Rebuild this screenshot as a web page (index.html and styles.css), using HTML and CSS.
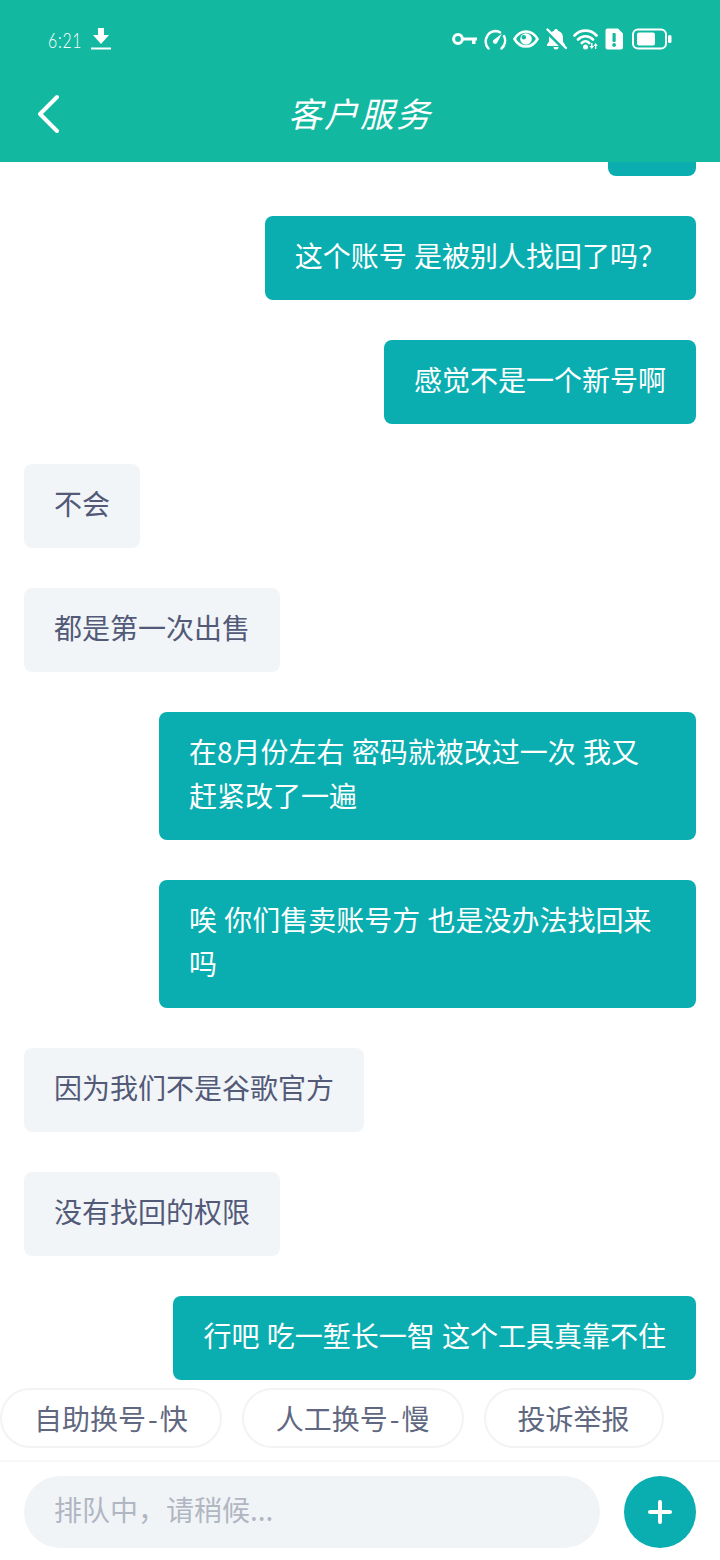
FILE: index.html
```html
<!DOCTYPE html>
<html lang="zh-CN">
<head>
    <meta charset="UTF-8">
    <meta name="viewport" content="width=device-width, initial-scale=1.0">
    <title>客户服务</title>
    <link rel="stylesheet" href="styles.css">
</head>
<body>
    <div class="page">
        <div class="header">
            <!-- Status bar -->
            <div class="status-bar">
                <div class="status-left">
                    <span class="status-time">6:21</span>
                    <svg width="20" height="22" viewBox="0 0 20 22"><path d="M7 0h6v7h5l-8 9-8-9h5z" fill="#fff"/><rect y="19.500" width="20" height="2" fill="#fff"/></svg>
                </div>
                <div class="status-right">
                    <svg width="25" height="14" viewBox="0 0 25 14"><circle cx="6" cy="7" r="4.400" fill="none" stroke="#fff" stroke-width="3"/><path d="M10 5.500h15v3h-1.500v3.500h-3.500V8.500H10z" fill="#fff"/></svg>
                    <svg width="24" height="21" viewBox="0 0 24 21"><path d="M5.500 19.500A10.500 10.500 0 0 1 12 2a10 10 0 0 1 5 1.300M21 7a10.500 10.500 0 0 1-2.500 12.500" fill="none" stroke="#fff" stroke-width="2.500" stroke-linecap="round"/><path d="M19 4.500 14 14a2.400 2.400 0 0 1-4-2.500z" fill="#fff"/></svg>
                    <svg width="26" height="18" viewBox="0 0 26 18"><path d="M1.500 9C4.500 3.800 8.500 1.500 13 1.500S21.500 3.800 24.500 9c-3 5.200-7 7.500-11.500 7.500S4.500 14.200 1.500 9z" fill="none" stroke="#fff" stroke-width="2.600"/><circle cx="13" cy="9" r="5.800" fill="#fff"/><circle cx="10.800" cy="7.300" r="2.200" fill="#12b8a0"/></svg>
                    <svg width="22" height="22" viewBox="0 0 22 22"><path d="M11 1c1 0 1.800.7 1.900 1.700 3.100.8 5.100 3.300 5.100 6.600v4.400l2 2.800v1.500H2v-1.500l2-2.800V9.300c0-3.300 2-5.800 5.100-6.600C9.200 1.700 10 1 11 1z" fill="#fff"/><path d="M8.500 19h5a2.500 2.500 0 0 1-5 0z" fill="#fff"/><path d="M1.500 2.500 20 21" stroke="#12b8a0" stroke-width="4.500"/><path d="M2.500 1.500 21 20" stroke="#fff" stroke-width="2.400" stroke-linecap="round"/></svg>
                    <svg width="26" height="22" viewBox="0 0 26 22"><path d="M1.500 7.500C7.500 1 17.500 1 23.500 7.500M5 11.500c4.200-4.400 10.800-4.400 15 0M8.800 15c2.200-2.200 5.200-2.200 7.400 0" fill="none" stroke="#fff" stroke-width="2.600" stroke-linecap="round"/><circle cx="12.500" cy="19" r="2.500" fill="#fff"/><path d="M18 15.500h1.500v3H21l-2.250 3-2.250-3H18zM22 21.500h1.300v-3h1.500l-2.150-3-2.150 3H22z" fill="#fff" transform="translate(0 -.5)"/></svg>
                    <svg width="18" height="22" viewBox="0 0 18 22"><path d="M2.500 .5H13l5 5v14a2 2 0 0 1-2 2H2.500a2 2 0 0 1-2-2v-17a2 2 0 0 1 2-2z" fill="#fff"/><rect x="7.500" y="5" width="3.200" height="9" rx="1" fill="#12b8a0"/><circle cx="9.100" cy="17" r="1.900" fill="#12b8a0"/></svg>
                    <svg class="status-battery" width="40" height="22" viewBox="0 0 40 22"><rect x="1" y="1.500" width="33" height="19" rx="5" fill="none" stroke="#fff" stroke-width="2"/><rect x="5" y="4.500" width="18" height="13" rx="2" fill="#fff"/><rect x="36" y="7" width="3.500" height="8" rx="1.500" fill="#fff"/></svg>
                </div>
            </div>
            <!-- Nav bar -->
            <div class="nav-bar">
                <svg class="nav-back" width="24" height="40" viewBox="0 0 24 40"><path d="M21 3 4 20l17 17" fill="none" stroke="#fff" stroke-width="4" stroke-linecap="round" stroke-linejoin="round"/></svg>
                <h1 class="nav-title">客户服务</h1>
            </div>
        </div>

        <!-- Messages -->
        <div class="messages">
            <div class="msg msg-me msg-stub"></div>
            <div class="msg msg-me">这个账号 是被别人找回了吗？</div>
            <div class="msg msg-me">感觉不是一个新号啊</div>
            <div class="msg msg-them">不会</div>
            <div class="msg msg-them">都是第一次出售</div>
            <div class="msg msg-me">在8月份左右 密码就被改过一次 我又赶紧改了一遍</div>
            <div class="msg msg-me">唉 你们售卖账号方 也是没办法找回来吗</div>
            <div class="msg msg-them">因为我们不是谷歌官方</div>
            <div class="msg msg-them">没有找回的权限</div>
            <div class="msg msg-me">行吧 吃一堑长一智 这个工具真靠不住</div>
        </div>

        <!-- Quick actions -->
        <div class="chips">
            <button class="chip">自助换号<span class="chip-dash">-</span>快</button>
            <button class="chip">人工换号<span class="chip-dash">-</span>慢</button>
            <button class="chip">投诉举报</button>
        </div>

        <!-- Input -->
        <div class="input-bar">
            <input class="input-box" type="text" placeholder="排队中，请稍候...">
            <button class="add-btn">
                <svg width="24" height="24" viewBox="0 0 24 24"><path d="M12 2v20M2 12h20" stroke="#fff" stroke-width="4" stroke-linecap="round"/></svg>
            </button>
        </div>
    </div>
</body>
</html>
```

FILE: styles.css
```css
:root {
    --header-color: #12b8a0;
    --bubble-color: #0aaeb0;
    --bubble-light: #f2f5f8;
    --text-dark: #525a78;
    --chip-text: #5f6880;
    --line-color: #f2f3f5;
}

* {
    box-sizing: border-box;
}

body {
    margin: 0;
    background-color: #ffffff;
    font-family: 'Noto Sans CJK SC', 'Noto Sans', sans-serif;
}

.page {
    display: flex;
    flex-direction: column;
    height: 1560px;
    overflow: hidden;
}

.header {
    flex: none;
    height: 162px;
    background-color: var(--header-color);
    position: relative;
    z-index: 1;
}

.status-bar {
    display: flex;
    justify-content: space-between;
    align-items: center;
    height: 78px;
    padding: 0 48px;
}

.status-left {
    display: flex;
    align-items: center;
    gap: 11px;
}

.status-time {
    width: 32px;
    font-family: 'Lato', sans-serif;
    font-weight: 300;
    font-size: 22px;
    letter-spacing: 1px;
    white-space: nowrap;
    color: #ffffff;
    transform: scaleX(0.72);
    transform-origin: left center;
}

.status-right {
    display: flex;
    align-items: center;
    gap: 6px;
}

.status-battery {
    margin-left: 3px;
}

.nav-bar {
    display: flex;
    justify-content: center;
    align-items: center;
    height: 72px;
    position: relative;
}

.nav-back {
    position: absolute;
    left: 36px;
    top: 16px;
}

.nav-title {
    margin: 0 0 4px;
    font-size: 34px;
    font-weight: 400;
    font-style: italic;
    letter-spacing: 2px;
    color: #ffffff;
}

.messages {
    flex: 1;
    min-height: 0;
    display: flex;
    flex-direction: column;
    justify-content: flex-end;
    gap: 40px;
    padding: 0 24px 8px;
    overflow: hidden;
}

.msg {
    flex: none;
    padding: 17px 30px 23px;
    border-radius: 8px;
    font-size: 28px;
    line-height: 44px;
    word-spacing: 1px;
}

.msg-me {
    align-self: flex-end;
    max-width: 537px;
    background-color: var(--bubble-color);
    color: #ffffff;
}

.msg-them {
    align-self: flex-start;
    background-color: var(--bubble-light);
    color: var(--text-dark);
}

.msg-stub {
    width: 88px;
    height: 84px;
}

.chips {
    flex: none;
    display: flex;
    gap: 20px;
    height: 60px;
}

.chip {
    height: 60px;
    padding: 0 32px;
    border: 2px solid var(--line-color);
    border-radius: 30px;
    background-color: #ffffff;
    font-family: inherit;
    font-size: 28px;
    white-space: nowrap;
    color: var(--chip-text);
}

.chip-dash {
    margin: 0 2px;
}

.input-bar {
    flex: none;
    display: flex;
    align-items: center;
    gap: 24px;
    height: 100px;
    margin-top: 12px;
    padding: 15px 24px 13px;
    border-top: 2px solid #f7f7f8;
}

.input-box {
    flex: 1;
    height: 72px;
    padding: 0 30px 6px;
    border: none;
    border-radius: 36px;
    background-color: #f1f4f7;
    font-family: inherit;
    font-size: 28px;
    outline: none;
}

.input-box::placeholder {
    color: #b1b6c3;
}

.add-btn {
    display: flex;
    justify-content: center;
    align-items: center;
    flex: none;
    width: 72px;
    height: 72px;
    padding: 0;
    border: none;
    border-radius: 50%;
    background-color: var(--bubble-color);
}
```
